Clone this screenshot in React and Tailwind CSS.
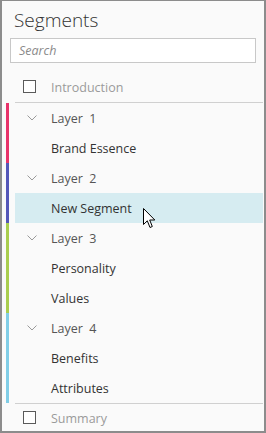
import React from "react";

const font = { fontFamily: '"Open Sans", "Noto Sans", sans-serif' };

const groups = [
  { layer: "Layer  1", bar: "bg-[#e8336a]", items: ["Brand Essence"] },
  { layer: "Layer  2", bar: "bg-[#5457b9]", items: ["New Segment"] },
  { layer: "Layer  3", bar: "bg-[#a9ce4f]", items: ["Personality", "Values"] },
  { layer: "Layer  4", bar: "bg-[#80cde6]", items: ["Benefits", "Attributes"] },
];

const Checkbox = () => (
  <span className="block h-[13px] w-[13px] border border-[#5a5a5a] bg-white" />
);

const Chevron = () => (
  <svg width="10" height="6" viewBox="0 0 10 6" className="text-[#9a9a9a]">
    <path d="M0.5 0.5 L5 5 L9.5 0.5" fill="none" stroke="currentColor" strokeWidth="1" />
  </svg>
);

const Cursor = () => (
  <svg
    width="13"
    height="21"
    viewBox="0 0 13 21"
    className="absolute left-[141px] top-[207px]"
  >
    <path
      d="M0.5 0.5 L0.5 16.5 L4.3 12.8 L7 19.5 L9.3 18.5 L6.7 12 L11.8 12 Z"
      fill="#ffffff"
      stroke="#000000"
      strokeWidth="1"
      strokeLinejoin="miter"
    />
  </svg>
);

const Row = ({ children, active = false }) => (
  <div
    className={`flex h-[30px] items-center pl-[36px] pt-[4px] text-[12.5px] ${
      active ? "bg-[#d6ecf1]" : ""
    }`}
  >
    {children}
  </div>
);

export default function App() {
  return (
    <div
      className="relative flex h-[433px] w-[266px] flex-col border-x-2 border-b-2 border-t border-[#8c8c8c] bg-[#fafafa]"
      style={font}
    >
      <div className="flex h-[38px] items-center pl-[12px] pt-[2px] text-[19px] font-light text-[#333333]">
        Segments
      </div>
      <div className="mx-[8px] flex h-[25px] items-center border border-[#c8c8c8] bg-white pl-[8px] pt-[2px] text-[12.5px] italic text-[#8a8a8a]">
        Search
      </div>
      <div className="mt-[9px] flex h-[30px] items-center pl-[21px] text-[12.5px] text-[#9a9a9a]">
        <Checkbox />
        <span className="ml-[15px] pt-[4px]">Introduction</span>
      </div>
      <div className="ml-[13px] mr-[1px] h-px bg-[#d0d0d0]" />
      <div className="flex flex-col">
        {groups.map((g) => (
          <div key={g.layer} className="flex">
            <div className={`ml-[4px] w-[3px] ${g.bar}`} />
            <div className="ml-[6px] mr-[1px] flex flex-1 flex-col">
              <div className="flex h-[30px] items-center pl-[12px] text-[12.5px] text-[#555555]">
                <Chevron />
                <span className="ml-[14px] whitespace-pre pt-[4px]">{g.layer}</span>
              </div>
              {g.items.map((item) => (
                <Row key={item} active={item === "New Segment"}>
                  <span className="text-[#333333]">{item}</span>
                </Row>
              ))}
            </div>
          </div>
        ))}
      </div>
      <div className="ml-[13px] mr-[1px] h-px bg-[#d0d0d0]" />
      <div className="flex h-[28px] items-center pl-[21px] text-[12.5px] text-[#9a9a9a]">
        <Checkbox />
        <span className="ml-[15px] pt-[4px]">Summary</span>
      </div>
      <Cursor />
    </div>
  );
}
